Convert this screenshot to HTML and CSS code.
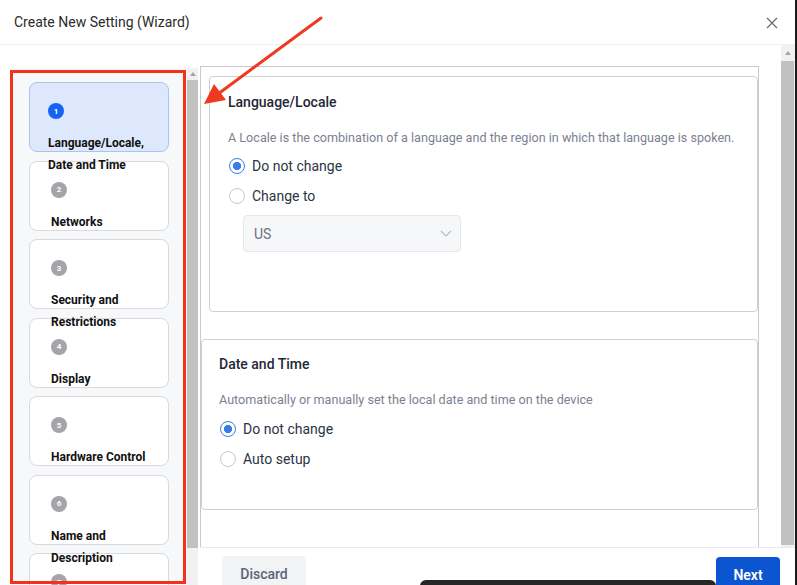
FILE: index.html
```html
<!DOCTYPE html>
<html lang="en">
<head>
<meta charset="UTF-8" />
<title>Create New Setting (Wizard)</title>
<link rel="stylesheet" href="styles.css">
</head>
<body>
<div class="dialog">
  <header class="dialog-header">
    <h1 class="dialog-title">Create New Setting (Wizard)</h1>
    <button class="close-btn" aria-label="Close">
      <svg width="12" height="12" viewBox="0 0 12 12"><path d="M1 1 L11 11 M11 1 L1 11" stroke="#6f6f6f" stroke-width="1.3" fill="none"/></svg>
    </button>
  </header>

  <div class="dialog-body">
    <aside class="steps-col">
      <div class="steps">
        <div class="step active"><span class="step-num">1</span><span class="step-label">Language/Locale, Date and Time</span></div>
        <div class="step"><span class="step-num">2</span><span class="step-label">Networks</span></div>
        <div class="step"><span class="step-num">3</span><span class="step-label">Security and Restrictions</span></div>
        <div class="step"><span class="step-num">4</span><span class="step-label">Display</span></div>
        <div class="step"><span class="step-num">5</span><span class="step-label">Hardware Control</span></div>
        <div class="step"><span class="step-num">6</span><span class="step-label">Name and Description</span></div>
        <div class="step"><span class="step-num">7</span></div>
      </div>
      <div class="scrollbar scrollbar-left">
        <span class="scroll-arrow"></span>
        <span class="scroll-thumb"></span>
      </div>
    </aside>

    <section class="main-col">
      <div class="main-top">
        <div class="content-scroll">
          <div class="outer-box">
            <div class="setting-card card-lang">
              <h2 class="card-title">Language/Locale</h2>
              <p class="card-desc">A Locale is the combination of a language and the region in which that language is spoken.</p>
              <div class="radio-group">
                <label class="radio-row"><span class="radio checked"></span>Do not change</label>
                <label class="radio-row"><span class="radio"></span>Change to</label>
              </div>
              <div class="select">
                <span>US</span>
                <svg width="12" height="7" viewBox="0 0 12 7"><path d="M1 1 L6 6 L11 1" stroke="#b5b9c1" stroke-width="1.1" fill="none"/></svg>
              </div>
            </div>

            <div class="setting-card card-date">
              <h2 class="card-title">Date and Time</h2>
              <p class="card-desc">Automatically or manually set the local date and time on the device</p>
              <div class="radio-group">
                <label class="radio-row"><span class="radio checked"></span>Do not change</label>
                <label class="radio-row"><span class="radio"></span>Auto setup</label>
              </div>
            </div>
          </div>
        </div>
        <div class="scrollbar scrollbar-right">
          <span class="scroll-arrow"></span>
          <span class="scroll-thumb"></span>
        </div>
      </div>

      <footer class="dialog-footer">
        <button class="btn btn-discard">Discard</button>
        <button class="btn btn-next">Next</button>
      </footer>
    </section>
  </div>
</div>

<!-- things lying over the dialog -->
<div class="toast-peek"></div>
<div class="annot-box"></div>
<svg class="annot-arrow" width="797" height="585" viewBox="0 0 797 585">
  <line x1="321" y1="18" x2="218" y2="94" stroke="#ee3a1f" stroke-width="3" stroke-linecap="round"/>
  <polygon points="204,104 214,84 226,100" fill="#ee3a1f"/>
</svg>
</body>
</html>
```

FILE: styles.css
```css
body {
  margin: 0; width: 797px; height: 585px; overflow: hidden; position: relative;
  background: #fff; font-family: Roboto, "Liberation Sans", sans-serif; color: #222;
}
.dialog {
  width: 797px; height: 585px; box-sizing: border-box; border-right: 2px solid #1b1b1b;
  display: flex; flex-direction: column;
}
.dialog-header {
  height: 45px; box-sizing: border-box; flex-shrink: 0;
  border-bottom: 1px solid #eef0f3;
  display: flex; align-items: center; justify-content: space-between;
  padding: 0 17px 0 14px;
}
.dialog-title { margin: 0; font-size: 14px; font-weight: 400; color: #2b2b2b; }
.close-btn { border: none; background: none; padding: 0; width: 12px; height: 12px; display: flex; margin-top: 1px; }

.dialog-body { flex: 1; display: flex; min-height: 0; }

/* left step list */
.steps-col {
  width: 200px; flex-shrink: 0; box-sizing: border-box;
  padding: 23px 2px 0 12px; display: flex;
}
.steps {
  width: 175px; box-sizing: border-box; background: #f7f8fa;
  padding: 14px 18px 0 17px; display: flex; flex-direction: column; gap: 8.5px; overflow: hidden;
}
.step {
  height: 70px; flex-shrink: 0; box-sizing: border-box;
  background: #fff; border: 1px solid #d9dadd; border-radius: 8px;
  padding: 20px 8px 0 21px;
  display: flex; flex-direction: column; align-items: flex-start;
}
.step.active { background: #dde8fc; border-color: #a9c4ef; padding-left: 18px; }
.step-num {
  width: 16px; height: 16px; flex-shrink: 0; border-radius: 50%; background: #a4a4a9; color: #fff;
  font-size: 8px; font-weight: 700; display: flex; align-items: center; justify-content: center;
}
.step.active .step-num { background: #1463f3; }
/* long labels spill over the next card, drawn on top of it */
.step-label {
  flex-shrink: 0; margin-top: 13px; font-size: 12px; font-weight: 700; line-height: 22px; color: #111;
  position: relative; z-index: 1;
}

/* fake scrollbars */
.scrollbar { display: flex; flex-direction: column; align-items: center; background: #f1f1f1; }
.scrollbar-left { width: 11px; }
.scrollbar-left .scroll-arrow { height: 12px; }
.scrollbar-left .scroll-thumb { height: 468px; width: 100%; background: #c1c1c1; }
.scrollbar-right { width: 14px; }
.scrollbar-right .scroll-arrow { height: 16px; }
.scrollbar-right .scroll-thumb { flex: 1; width: 13px; align-self: flex-start; background: #c1c1c1; margin-bottom: 2px; }
.scroll-arrow { width: 100%; display: flex; align-items: center; justify-content: center; }
.scroll-arrow::before {
  content: ""; border-left: 3.5px solid transparent; border-right: 3.5px solid transparent;
  border-bottom: 4px solid #a3a3a3;
}

/* right content */
.main-col { flex: 1; display: flex; flex-direction: column; min-width: 0; }
.main-top { flex: 1; display: flex; min-height: 0; }
.content-scroll { flex: 1; padding: 21px 22px 0 0; overflow: hidden; }
.outer-box {
  height: 100%; box-sizing: border-box; border: 1px solid #cacaca; border-bottom: none;
  padding-top: 9px;
}
.setting-card { border: 1px solid #cfd0d3; border-radius: 4px; background: #fff; box-sizing: border-box; }
.card-lang { height: 236px; margin-left: 8px; padding: 15px 18px 0; }
.card-date { height: 171px; margin-top: 27px; padding: 14px 17px 0; }
.card-title { margin: 0; font-size: 14px; font-weight: 500; line-height: 20px; color: #1f2738; }
.card-desc { margin: 17px 0 0; font-size: 12.6px; line-height: 18px; color: #7b8191; white-space: nowrap; }
.radio-group { margin-top: 4px; }
.card-date .radio-group { margin-top: 5px; }
.radio-row { height: 30px; display: flex; align-items: center; gap: 7px; font-size: 14px; color: #2b3445; }
.radio {
  width: 16px; height: 16px; box-sizing: border-box; margin-left: 1px;
  border: 1.5px solid #c5cad3; border-radius: 50%; background: #fff;
}
.radio.checked { border-color: #3a7ce8; background: radial-gradient(circle, #3a7ce8 0 3.8px, #fff 4.4px); }
.select {
  margin: 4px 0 0 15px; width: 218px; height: 37px; box-sizing: border-box;
  background: #f6f7f9; border: 1px solid #e4e6ea; border-radius: 4px;
  padding: 0 8px 0 10px; display: flex; align-items: center; justify-content: space-between;
  font-size: 14px; color: #6b7280;
}

/* footer */
.dialog-footer {
  height: 38px; flex-shrink: 0; box-sizing: border-box;
  border-top: 1px solid #e8eaee; padding: 8px 15px 0 22px;
  display: flex; justify-content: space-between; align-items: flex-start;
}
.btn { height: 36px; border: none; border-radius: 4px; font-family: inherit; font-size: 14px; padding: 0; }
.btn-discard { width: 84px; background: #f2f3f5; color: #5b6577; font-weight: 500; }
.btn-next { width: 64px; background: #0b55d0; color: #fff; font-weight: 600; margin-top: 1px; }

/* overlays */
.toast-peek {
  position: absolute; left: 420px; top: 580px; width: 296px; height: 10px;
  background: #262626; border-radius: 6px 6px 0 0;
}
.annot-box {
  position: absolute; left: 10px; top: 70px; width: 176px; height: 514px; box-sizing: border-box;
  border: 3px solid #f5311b; pointer-events: none;
}
.annot-arrow { position: absolute; left: 0; top: 0; pointer-events: none; }
```
